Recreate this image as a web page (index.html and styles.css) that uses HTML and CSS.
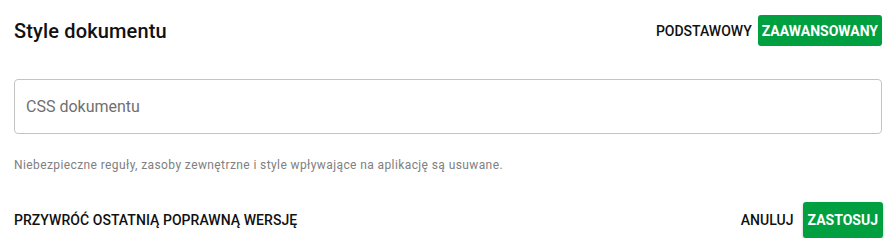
FILE: index.html
```html
<!DOCTYPE html>
<html lang="pl">
<head>
    <meta charset="UTF-8">
    <meta name="viewport" content="width=device-width, initial-scale=1.0">
    <title>Style dokumentu</title>
    <link rel="stylesheet" href="styles.css">
</head>
<body>
    <div class="dialog">
        <div class="header">
            <h2>Style dokumentu</h2>
            <div class="mode-toggle">
                <button class="mode">Podstawowy</button>
                <button class="mode active">Zaawansowany</button>
            </div>
        </div>
        <div class="field">
            <input type="text" placeholder="CSS dokumentu">
        </div>
        <p class="helper">Niebezpieczne reguły, zasoby zewnętrzne i style wpływające na aplikację są usuwane.</p>
        <div class="actions">
            <button class="text-button">Przywróć ostatnią poprawną wersję</button>
            <div class="actions-right">
                <button class="text-button">Anuluj</button>
                <button class="primary">Zastosuj</button>
            </div>
        </div>
    </div>
</body>
</html>
```

FILE: styles.css
```css
body {
    margin: 0;
    padding: 0;
    font-family: Roboto, "Liberation Sans", Arial, sans-serif;
    background: #fff;
    color: #111;
}
.dialog {
    padding: 15px 14px 0 14px;
}
.header {
    display: flex;
    justify-content: space-between;
    align-items: center;
    height: 31px;
}
.header h2 {
    margin: 0;
    font-size: 20px;
    font-weight: 500;
    line-height: 31px;
    padding-top: 2px;
    letter-spacing: 0.15px;
}
.mode-toggle {
    display: flex;
    align-items: center;
    gap: 6px;
}
button {
    font-family: inherit;
    font-size: 14px;
    font-weight: 500;
    text-transform: uppercase;
    border: none;
    background: none;
    cursor: pointer;
    color: #111;
    padding: 0;
    letter-spacing: 0;
}
.mode {
    height: 31px;
}
.mode.active {
    background: #00a040;
    color: #fff;
    border-radius: 3px;
    padding: 0 4px;
    font-weight: 700;
}
.field {
    margin-top: 33px;
}
.field input {
    box-sizing: border-box;
    width: 100%;
    height: 55px;
    border: 1px solid #c4c4c4;
    border-radius: 4px;
    padding: 0 11px;
    font-family: inherit;
    font-size: 16px;
    color: #111;
    outline: none;
}
.field input::placeholder {
    color: #707070;
}
.helper {
    margin: 23px 0 0 0;
    font-size: 12px;
    line-height: 16px;
    color: #808080;
    letter-spacing: 0.4px;
}
.actions {
    display: flex;
    justify-content: space-between;
    align-items: center;
    margin-top: 29px;
    margin-right: -1px;
}
.actions-right {
    display: flex;
    align-items: center;
    gap: 9px;
}
.text-button {
    height: 36px;
    letter-spacing: 0.05px;
}
.primary {
    height: 36px;
    padding: 0 5px;
    background: #00a040;
    color: #fff;
    font-weight: 700;
    border-radius: 3px;
    box-shadow: 0 2px 3px rgba(0, 0, 0, 0.25);
}
```
